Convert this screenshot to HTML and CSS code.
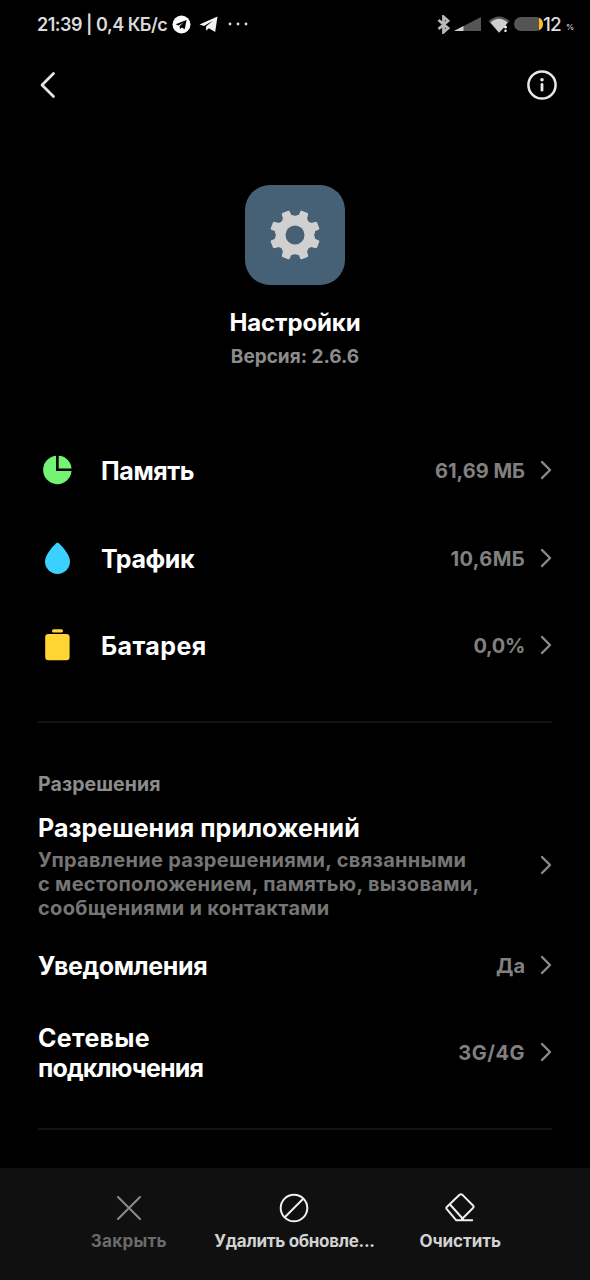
FILE: index.html
```html
<!DOCTYPE html>
<html lang="ru">
<head>
<meta charset="utf-8">
<title>Настройки</title>
<link rel="stylesheet" href="styles.css">
</head>
<body>
<div class="screen">
  <div class="status">
    <span class="status-text">21:39 | 0,4 КБ/с</span>
    <svg class="tg-round" width="19" height="19" viewBox="0 0 19 19"><circle cx="9.5" cy="9.5" r="9" fill="#fff"/><path d="M3.6 9.3 14.6 5 12.7 14.3 9.8 12.4 8 14 7.6 11 12 7.2 6.4 10.5Z" fill="#000"/></svg>
    <svg class="tg-plane" width="19" height="17" viewBox="0 0 19 17"><path d="M0.5 8.4 18.5.5 16.2 16 9.8 12.2 7.2 14.7 7 10.6 13.8 4.8 5 9.9Z" fill="#f2f2f2"/></svg>
    <svg class="dots" width="20" height="4" viewBox="0 0 20 4"><g fill="#ddd"><circle cx="2" cy="2" r="1.4"/><circle cx="10" cy="2" r="1.4"/><circle cx="18" cy="2" r="1.4"/></g></svg>
    <span class="spacer"></span>
    <svg class="bt" width="13" height="19" viewBox="0 0 13 19"><path d="M1.5 5 11 13.2 6.5 17.2V1.8L11 5.8 1.5 14" fill="none" stroke="#b8b8b8" stroke-width="2.8"/></svg>
    <svg class="signal" width="27" height="14" viewBox="0 0 27 14"><path d="M0 14 27 0V14Z" fill="#555"/><path d="M0 14 9.5 9V14Z" fill="#d0d0d0"/></svg>
    <svg class="wifi" width="22" height="17" viewBox="0 0 22 17"><path d="M.5 5Q11-4 21.500 5L11 17Z" fill="#555"/><path d="M2.500 6.500Q11-1 19.500 6.500L15.500 12 11 16.500Z" fill="#d0d0d0"/><circle cx="17.500" cy="11" r="1.500" fill="#eee"/><circle cx="17.500" cy="14.800" r="1.300" fill="#eee"/></svg>
    <svg class="batt" width="29" height="14" viewBox="0 0 29 14"><rect width="29" height="14" rx="7" fill="#555"/><path d="M25 0.800Q29 2.500 29 7T25 13.200Z" fill="#fdbd20"/></svg>
    <span class="batt-num">12</span><span class="batt-pct">%</span>
  </div>

  <div class="topbar">
    <svg width="18" height="28" viewBox="0 0 18 28"><path d="M14.500 2.500 3 14 14.500 25.500" fill="none" stroke="#e6e6e6" stroke-width="2.800" stroke-linecap="round" stroke-linejoin="round"/></svg>
    <svg width="30" height="30" viewBox="0 0 30 30"><circle cx="15" cy="15" r="13.600" fill="none" stroke="#e8e8e8" stroke-width="2.500"/><circle cx="15" cy="9.700" r="1.800" fill="#e8e8e8"/><path d="M15 14.500V20.200" stroke="#e8e8e8" stroke-width="2.800" stroke-linecap="round"/></svg>
  </div>

  <div class="hero">
    <div class="app-icon">
      <svg width="50" height="50" viewBox="-25 -25 50 50">
        <defs><mask id="m"><rect x="-25" y="-25" width="50" height="50" fill="#fff"/><circle r="9.500" fill="#000"/>
        <g fill="#000"><circle cy="-23.500" r="4.300"/><circle cy="23.500" r="4.300"/><circle cx="-23.500" r="4.300"/><circle cx="23.500" r="4.300"/><circle cx="16.600" cy="16.600" r="4.300"/><circle cx="-16.600" cy="16.600" r="4.300"/><circle cx="16.600" cy="-16.600" r="4.300"/><circle cx="-16.600" cy="-16.600" r="4.300"/></g></mask></defs>
        <path mask="url(#m)" d="M-4-19.500H4L6-24 12.700-21.500 12-16 16-12 21.500-12.700 24-6 19.500-4V4L24 6 21.500 12.700 16 12 12 16 12.700 21.500 6 24 4 19.500H-4L-6 24-12.700 21.500-12 16-16 12-21.500 12.700-24 6-19.500 4V-4L-24-6-21.500-12.700-16-12-12-16-12.700-21.500-6-24Z" fill="#d0d0d0" stroke="#d0d0d0" stroke-width="1" stroke-linejoin="round"/>
      </svg>
    </div>
    <div class="app-name">Настройки</div>
    <div class="app-version">Версия: 2.6.6</div>
  </div>

  <div class="usage">
    <div class="row">
      <svg class="lead" width="30" height="30" viewBox="0 0 30 30"><path d="M14 .8A14.200 14.200 0 1 0 29.500 16H14Z" fill="#73f573"/><path d="M16.700.8A13.500 13.500 0 0 1 29.500 13.500H16.700Z" fill="#73f573"/></svg>
      <span class="title t1">Память</span><span class="value">61,69 МБ</span>
      <svg class="chev" width="12" height="20" viewBox="0 0 12 20"><path d="M2 2 10 10 2 18"/></svg>
    </div>
    <div class="row">
      <svg class="lead" width="30" height="34" viewBox="0 0 30 34"><path d="M15.500 1.500C17 1.500 28 13 28 20.500A12.500 12.500 0 0 1 3 20.500C3 13 14 1.500 15.500 1.500Z" fill="#3ad0ff"/></svg>
      <span class="title t1">Трафик</span><span class="value v2">10,6МБ</span>
      <svg class="chev" width="12" height="20" viewBox="0 0 12 20"><path d="M2 2 10 10 2 18"/></svg>
    </div>
    <div class="row">
      <svg class="lead" width="30" height="32" viewBox="0 0 30 32"><rect x="10" y=".2" width="11" height="3.200" rx="1.500" fill="#ffd535"/><rect x="3.200" y="5" width="24.400" height="26.200" rx="3.200" fill="#ffd535"/></svg>
      <span class="title t3">Батарея</span><span class="value v3">0,0%</span>
      <svg class="chev" width="12" height="20" viewBox="0 0 12 20"><path d="M2 2 10 10 2 18"/></svg>
    </div>
  </div>

  <div class="divider"></div>
  <div class="section-label">Разрешения</div>
  <div class="row perms">
    <div class="stack">
      <div class="title t4">Разрешения приложений</div>
      <div class="desc">Управление разрешениями, связанными<br>с местоположением, памятью, вызовами,<br>сообщениями и контактами</div>
    </div>
    <svg class="chev" width="12" height="20" viewBox="0 0 12 20"><path d="M2 2 10 10 2 18"/></svg>
  </div>
  <div class="row notif">
    <span class="title t5">Уведомления</span><span class="value">Да</span>
    <svg class="chev" width="12" height="20" viewBox="0 0 12 20"><path d="M2 2 10 10 2 18"/></svg>
  </div>
  <div class="row network">
    <span class="title t6">Сетевые<br><span class="t7">подключения</span></span><span class="value v6">3G/4G</span>
    <svg class="chev" width="12" height="20" viewBox="0 0 12 20"><path d="M2 2 10 10 2 18"/></svg>
  </div>
  <div class="divider second"></div>

  <div class="actions">
    <div class="action muted">
      <svg width="30" height="30" viewBox="0 0 30 30"><path d="M4 4 26 26M26 4 4 26"/></svg>
      <span class="a1">Закрыть</span>
    </div>
    <div class="action">
      <svg width="30" height="30" viewBox="0 0 30 30"><circle cx="15" cy="15" r="13.300"/><path d="M5.800 24.200 24.200 5.800"/></svg>
      <span class="a2">Удалить обновле...</span>
    </div>
    <div class="action">
      <svg width="30" height="30" viewBox="0 0 30 30"><path d="M27.200 27.300H11.300L1.800 16.200Q.9 15 1.800 13.900L14.800 1.600Q16 .7 17.200 1.600L28 12.500Q29.200 13.800 28 15L17 26M5 11.500 18 26"/></svg>
      <span class="a3">Очистить</span>
    </div>
  </div>
</div>
</body>
</html>
```
FILE: styles.css
```css
* { box-sizing: border-box; }
body { margin: 0; background: #000; font-family: Inter, "Noto Sans", sans-serif; font-weight: 700; color: #fff; }
svg { display: block; flex: none; }
.screen { width: 590px; height: 1280px; display: flex; flex-direction: column; overflow: hidden; white-space: nowrap; }

.status { height: 48px; padding: 0 16px 0 37px; display: flex; align-items: center; flex: none; }
.status-text { width: 135px; font-size: 18px; font-weight: 600; color: #dadada; letter-spacing: -0.5px; }
.tg-plane { margin-left: 8px; }
.dots { margin-left: 10px; }
.spacer { flex: 1; }
.signal { margin-left: 4px; }
.wifi { margin-left: 7px; }
.batt { margin-left: 4px; }
.batt-num { width: 19px; font-size: 19px; color: #ddd; font-weight: 500; letter-spacing: -1px; }
.batt-pct { width: 8px; margin: 5px 0 0 4px; font-size: 8px; color: #bbb; }

.topbar { height: 74px; padding: 0 33px 0 39px; display: flex; justify-content: space-between; align-items: center; flex: none; }

.hero { height: 304px; padding-top: 63px; display: flex; flex-direction: column; align-items: center; flex: none; }
.app-icon { width: 100px; height: 100px; border-radius: 25px; background: #466176; display: flex; align-items: center; justify-content: center; flex: none; }
.app-name { margin-top: 22px; font-size: 24px; line-height: 32px; letter-spacing: -0.1px; }
.app-version { margin-top: 3px; font-size: 19px; line-height: 30px; color: #8c8c8c; }

.row { display: flex; align-items: center; padding: 0 38px; flex: none; }
.usage { height: 263px; flex: none; display: flex; flex-direction: column; }
.usage .row { flex: 1; }
.usage .title { margin: 2px 0 0 29px; }
.lead { margin-left: 4px; }
.title { font-size: 25px; line-height: 30px; flex: 1; }
.t1 { letter-spacing: -0.4px; }
.t3 { letter-spacing: 0.4px; }
.t4 { letter-spacing: 0.03px; }
.t5 { letter-spacing: -0.4px; }
.t6 { letter-spacing: 0.3px; }
.t7 { letter-spacing: -0.85px; }
.notif .title, .network .title { margin-top: 2px; }
.value { font-size: 20px; line-height: 28px; color: #808080; margin: 2px 15px 0 0; }
.v2 { letter-spacing: 0.4px; }
.v3 { letter-spacing: -0.3px; }
.v6 { letter-spacing: 0.5px; }
.chev { fill: none; stroke: #8a8a8a; stroke-width: 2.400; stroke-linecap: round; stroke-linejoin: round; }

.divider { height: 2px; margin: 32px 38px 0; background: #131313; flex: none; }
.section-label { margin: 47px 38px 0; font-size: 19.5px; line-height: 28px; letter-spacing: 0.1px; color: #8c8c8c; flex: none; }
.perms { margin-top: 15px; }
.perms .chev { margin-bottom: 3px; }
.stack { flex: 1; }
.desc { margin-top: 5px; font-size: 20px; line-height: 24px; letter-spacing: 0.3px; color: #757575; }
.notif { height: 62px; margin-top: 14px; }
.network { height: 88px; margin-top: 12px; }
.second { margin-top: 32px; }

.actions { height: 112px; margin-top: auto; padding: 25px 47px 0 46px; background: #101010; display: grid; grid-template-columns: repeat(3, minmax(0, 1fr)); flex: none; }
.action { display: flex; flex-direction: column; align-items: center; color: #d2d2d2; font-size: 17px; line-height: 24px; }
.action svg { fill: none; stroke: #efefef; stroke-width: 2; stroke-linecap: round; stroke-linejoin: round; }
.action span { margin-top: 6px; }
.a1 { letter-spacing: 0.3px; }
.a2 { letter-spacing: -0.3px; }
.a3 { letter-spacing: -0.1px; }
.muted { color: #6b6b6b; }
.muted svg { stroke: #8c8c8c; }
```
